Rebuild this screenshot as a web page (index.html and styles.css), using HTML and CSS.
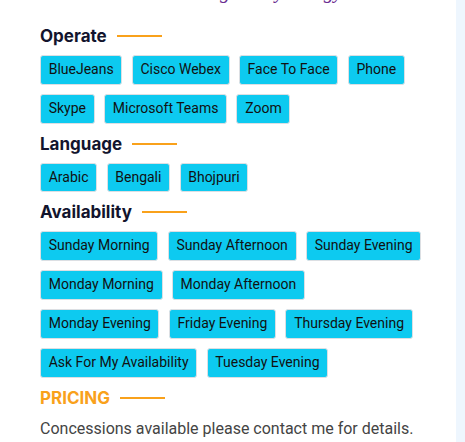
FILE: index.html
```html
<!DOCTYPE html>
<html lang="en">
<head>
  <meta charset="UTF-8">
  <title>Profile details</title>
  <link rel="stylesheet" href="styles.css">
</head>
<body>
  <main class="profile">
    <p class="intro">gain my energy</p>

    <h3 class="section-title">Operate</h3>
    <ul class="tags">
      <li>BlueJeans</li>
      <li>Cisco Webex</li>
      <li>Face To Face</li>
      <li>Phone</li>
      <li>Skype</li>
      <li>Microsoft Teams</li>
      <li>Zoom</li>
    </ul>

    <h3 class="section-title">Language</h3>
    <ul class="tags">
      <li>Arabic</li>
      <li>Bengali</li>
      <li>Bhojpuri</li>
    </ul>

    <h3 class="section-title">Availability</h3>
    <ul class="tags">
      <li>Sunday Morning</li>
      <li>Sunday Afternoon</li>
      <li>Sunday Evening</li>
      <li>Monday Morning</li>
      <li>Monday Afternoon</li>
      <li>Monday Evening</li>
      <li>Friday Evening</li>
      <li>Thursday Evening</li>
      <li>Ask For My Availability</li>
      <li>Tuesday Evening</li>
    </ul>

    <h3 class="section-title pricing">PRICING</h3>
    <p class="note">Concessions available please contact me for details.</p>
  </main>
  <aside class="side"></aside>
</body>
</html>
```

FILE: styles.css
```css
body {
  margin: 0;
  display: flex;
  min-height: 100vh;
  background: #fff;
}
.profile {
  width: 388px;
  padding: 0 28px 0 40px;
}
.side {
  flex: 1;
  background: #eef6fe;
}
.intro {
  margin: -21px 0 23px;
  padding-left: 180px;
  font-family: "Liberation Serif", serif;
  font-style: italic;
  font-size: 20px;
  line-height: 24px;
  color: #6a2c91;
}
.section-title {
  display: flex;
  align-items: center;
  gap: 10px;
  margin: 10px 0 9px;
  font-family: Inter, sans-serif;
  font-weight: 700;
  font-size: 17px;
  line-height: 20px;
  color: #12142d;
}
.intro + .section-title {
  margin-top: 0;
}
.section-title::after {
  content: "";
  width: 45px;
  height: 2px;
  background: #f9a11b;
}
.pricing {
  color: #f9a11b;
}
.tags {
  list-style: none;
  margin: 0;
  padding: 0;
  display: flex;
  flex-wrap: wrap;
  gap: 9.4px;
}
.tags li {
  padding: 3px 7.7px;
  border: 1px solid #dcdfe3;
  border-radius: 3px;
  background: #0dcaf0;
  font-family: Roboto, sans-serif;
  font-size: 14px;
  line-height: 21.6px;
  color: #111;
}
.note {
  margin: 6px 0 0;
  font-family: Roboto, sans-serif;
  font-size: 16px;
  line-height: 24px;
  color: #444;
}
```
